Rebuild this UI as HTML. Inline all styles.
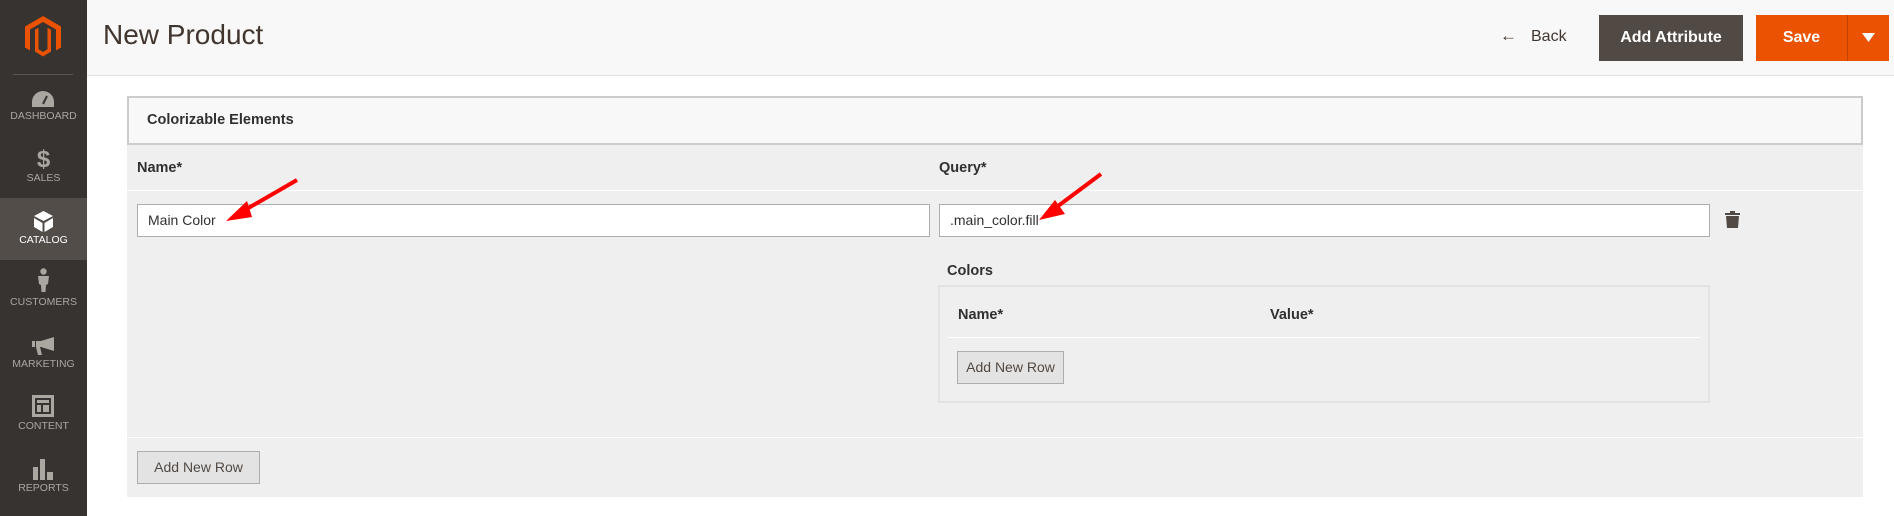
<!DOCTYPE html>
<html><head><meta charset="utf-8"><style>
*{box-sizing:border-box;margin:0;padding:0}
body{width:1894px;height:516px;overflow:hidden;background:#fff;font-family:"Liberation Sans",sans-serif;color:#303030;position:relative}
.a{position:absolute}
.side{left:0;top:0;width:87px;height:516px;background:#373330}
.nav{position:absolute;left:0;width:87px;text-align:center;color:#aaa6a0;font-size:10.5px}
.lbl{position:absolute;width:87px;text-align:center;font-size:10.5px;color:#aaa6a0}
.btn{position:absolute;background:#e3e3e3;border:1px solid #adadad;font-size:14px;color:#514943;text-align:center}
.inp{position:absolute;background:#fff;border:1px solid #adadad;font-size:14px;padding-left:10px;line-height:31px;color:#303030}
</style></head><body>
<div class="a side"></div>
<svg class="a" style="left:25px;top:16px" width="36" height="42" viewBox="0 0 36 42"><path d="M18 0L36 10.5V31.5L31 34.5V13.5L18 6L5 13.5V34.5L0 31.5V10.5Z M18 9L26 13.7V35.5L18 40.5L10 35.5V13.7L13.5 11.7V33.3L18 36L22.5 33.3V11.7Z" fill="#eb5202"/></svg>
<div class="a" style="left:13px;top:74px;width:60px;height:1px;background:#5a5550"></div>
<svg class="a" style="left:32px;top:91px" width="22" height="16" viewBox="0 0 22 16"><path d="M11 0A11 11 0 0 0 0 11V16H22V11A11 11 0 0 0 11 0Z" fill="#aaa6a0"/><path d="M11 13L15 5" stroke="#373330" stroke-width="2"/></svg>
<div class="lbl" style="top:110px">DASHBOARD</div>
<div class="a" style="left:0;top:146px;width:87px;text-align:center;font-size:24px;font-weight:bold;color:#aaa6a0">$</div>
<div class="lbl" style="top:172px">SALES</div>
<div class="a" style="left:0;top:198px;width:87px;height:62px;background:#524d49"></div>
<svg class="a" style="left:34px;top:211px" width="19" height="21" viewBox="0 0 19 21"><path d="M9.5 0L19 5L9.5 10L0 5Z M0 7L8.5 12V21L0 16Z M19 7L10.5 12V21L19 16Z" fill="#fff"/></svg>
<div class="lbl" style="top:234px;color:#fff">CATALOG</div>
<svg class="a" style="left:37px;top:268px" width="13" height="24" viewBox="0 0 13 24"><circle cx="6.5" cy="3.5" r="3.2" fill="#aaa6a0"/><path d="M1 8H12L11 16L9 17L8.5 24H4.5L4 17L2 16Z" fill="#aaa6a0"/></svg>
<div class="lbl" style="top:296px">CUSTOMERS</div>
<svg class="a" style="left:32px;top:337px" width="22" height="18" viewBox="0 0 22 18"><path d="M0 4H3V10H0Z M4 4H9L22 0V14L9 10H8L10 18H6L4 10Z" fill="#aaa6a0"/></svg>
<div class="lbl" style="top:358px">MARKETING</div>
<svg class="a" style="left:32px;top:395px" width="22" height="22" viewBox="0 0 22 22"><path d="M0 0H22V22H0Z M3 3V19H19V3Z M5 5H17V8H5Z M5 10H9V17H5Z M11 10H17V17H11Z" fill="#aaa6a0" fill-rule="evenodd"/></svg>
<div class="lbl" style="top:420px">CONTENT</div>
<svg class="a" style="left:33px;top:459px" width="20" height="21" viewBox="0 0 20 21"><path d="M0 8H5V21H0Z M7 0H12V21H7Z M14 13H20V21H14Z" fill="#aaa6a0"/></svg>
<div class="lbl" style="top:482px">REPORTS</div>

<div class="a" style="left:87px;top:0;width:1807px;height:76px;background:#f8f8f8;border-bottom:1px solid #e3e3e3"></div>
<div class="a" style="left:103px;top:19px;font-size:28px;color:#41362f">New Product</div>
<div class="a" style="left:1500px;top:26px;font-size:17px;color:#41362f">&#8592;</div>
<div class="a" style="left:1531px;top:28px;font-size:16px;color:#41362f">Back</div>
<div class="a" style="left:1599px;top:15px;width:144px;height:46px;background:#514943;color:#fff;font-size:16px;font-weight:bold;text-align:center;line-height:46px">Add Attribute</div>
<div class="a" style="left:1756px;top:15px;width:133px;height:46px;background:#eb5202"></div>
<div class="a" style="left:1756px;top:15px;width:91px;height:46px;color:#fff;font-size:16px;font-weight:bold;text-align:center;line-height:46px">Save</div>
<div class="a" style="left:1847px;top:15px;width:1px;height:46px;background:#c64200"></div>
<svg class="a" style="left:1862px;top:33px" width="13" height="10"><path d="M0 0H13L6.5 9Z" fill="#fff"/></svg>

<div class="a" style="left:127px;top:96px;width:1736px;height:49px;background:#f8f8f8;border:2px solid #cccccc"></div>
<div class="a" style="left:147px;top:112px;font-size:14.5px;font-weight:bold;color:#303030">Colorizable Elements</div>
<div class="a" style="left:127px;top:145px;width:1736px;height:352px;background:#efefef"></div>
<div class="a" style="left:137px;top:160px;font-size:14.5px;font-weight:bold;color:#303030">Name*</div>
<div class="a" style="left:939px;top:160px;font-size:14.5px;font-weight:bold;color:#303030">Query*</div>
<div class="a" style="left:127px;top:190px;width:1736px;height:1px;background:#fff"></div>
<div class="inp" style="left:137px;top:204px;width:793px;height:33px">Main Color</div>
<div class="inp" style="left:939px;top:204px;width:771px;height:33px">.main_color.fill</div>
<svg class="a" style="left:1725px;top:211px" width="15" height="17" viewBox="0 0 15 17"><path d="M5 0H10V2H15V4H0V2H5Z M1 5H14L13 17H2Z" fill="#514943"/></svg>
<div class="a" style="left:947px;top:263px;font-size:14.5px;font-weight:bold;color:#303030">Colors</div>
<div class="a" style="left:938px;top:285px;width:772px;height:118px;border:2px solid #e3e3e3"></div>
<div class="a" style="left:958px;top:307px;font-size:14.5px;font-weight:bold;color:#303030">Name*</div>
<div class="a" style="left:1270px;top:307px;font-size:14.5px;font-weight:bold;color:#303030">Value*</div>
<div class="a" style="left:948px;top:337px;width:752px;height:1px;background:#fff"></div>
<div class="btn" style="left:957px;top:351px;width:107px;height:33px;line-height:31px">Add New Row</div>
<div class="a" style="left:127px;top:437px;width:1736px;height:1px;background:#fff"></div>
<div class="btn" style="left:137px;top:451px;width:123px;height:33px;line-height:31px">Add New Row</div>

<svg class="a" style="left:0;top:0" width="1894" height="516">
<path d="M297 180L238 214" stroke="#f00" stroke-width="4"/><path d="M226 221L247 201L252 217Z" fill="#f00"/>
<path d="M1101 174L1050 212" stroke="#f00" stroke-width="4"/><path d="M1039 220L1055 200L1065 214Z" fill="#f00"/>
</svg>
</body></html>
